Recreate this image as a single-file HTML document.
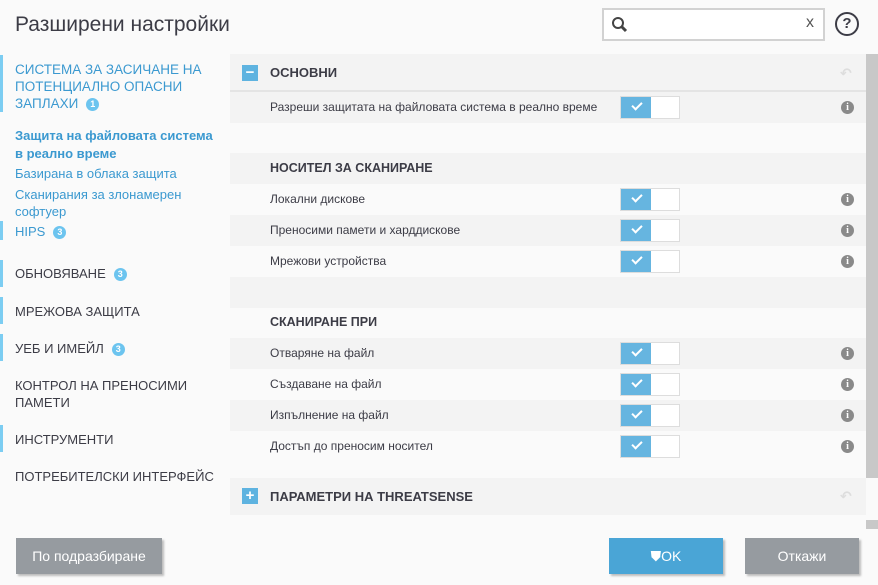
<!DOCTYPE html>
<html><head><meta charset="utf-8"><style>
*{margin:0;padding:0;box-sizing:border-box}
body{width:878px;height:585px;background:#fafafa;font-family:"Liberation Sans","DejaVu Sans",sans-serif;position:relative;overflow:hidden;color:#3c3c46}
.a{position:absolute}
.title{left:15px;top:13px;font-size:21px;color:#3c3c46}
.search{left:602px;top:8px;width:223px;height:33px;border:2px solid #d2d2d2;background:#fff}
.nav{font-size:13px;color:#3c3c46;left:15px;line-height:17px}
.bar{position:absolute;left:0;width:3px;background:#7ccdf2}
.blue{color:#3b99d0}
.badge{display:inline-block;width:13px;height:13px;border-radius:50%;background:#6cc4ef;color:#fff;font-size:9px;text-align:center;line-height:13px;margin-left:8px;vertical-align:1px;font-weight:bold}
.row{position:absolute;left:230px;width:636px;height:31px;font-size:12px;line-height:31px;padding-left:40px}
.g{background:#f3f3f3}
.hd{font-weight:bold;font-size:12.5px}
.tg{position:absolute;left:390px;top:4px;width:60px;height:23px;border:1px solid #ddd;background:#fff}
.tg:before{content:"";position:absolute;left:0;top:0;width:30px;height:21px;background:#66b5e0}
.tg:after{content:"";position:absolute;left:11px;top:5px;width:8px;height:4px;border-left:2px solid #fff;border-bottom:2px solid #fff;transform:rotate(-45deg)}
.i{position:absolute;left:611px;top:9px;width:13px;height:13px;border-radius:50%;background:#8a8a8a;color:#fff;font-size:10px;font-weight:bold;text-align:center;line-height:13px;font-family:"Liberation Serif",serif}
.sec{position:absolute;left:230px;width:636px;background:#f3f3f3;font-weight:bold;font-size:13px;padding-left:40px}
.sq{position:absolute;left:12px;width:16px;height:16px;background:#5eb3e0;color:#fff;font-size:15px;line-height:16px;text-align:center}
.btn{position:absolute;top:538px;height:36px;color:#fff;font-size:14px;text-align:center;line-height:36px;box-shadow:2px 2px 2px rgba(0,0,0,.25)}
</style></head><body>
<div class="a title">Разширени настройки</div>
<div class="a search"><svg class="a" style="left:6px;top:5px" width="20" height="20"><circle cx="8" cy="8" r="5" fill="none" stroke="#444" stroke-width="2"/><line x1="11.5" y1="11.5" x2="16" y2="16" stroke="#444" stroke-width="3"/></svg><span class="a" style="left:202px;top:4px;font-size:16px;color:#555">x</span></div>
<div class="a" style="left:835px;top:12px;width:24px;height:24px;border:2px solid #3c3c46;border-radius:50%;text-align:center;font-size:15px;line-height:20px;font-weight:bold">?</div>

<div class="bar" style="top:55px;height:57px"></div>
<div class="a nav blue" style="top:61px;font-size:13.5px">СИСТЕМА ЗА ЗАСИЧАНЕ НА<br>ПОТЕНЦИАЛНО ОПАСНИ<br>ЗАПЛАХИ<span class="badge">1</span></div>
<div class="a nav blue" style="top:127px;font-weight:bold;line-height:18px">Защита на файловата система<br>в реално време</div>
<div class="a nav blue" style="top:165px">Базирана в облака защита</div>
<div class="a nav blue" style="top:186px">Сканирания за злонамерен<br>софтуер</div>
<div class="bar" style="top:221px;height:19px"></div>
<div class="a nav blue" style="top:223px">HIPS<span class="badge">3</span></div>
<div class="bar" style="top:260px;height:27px"></div>
<div class="a nav" style="top:265px">ОБНОВЯВАНЕ<span class="badge">3</span></div>
<div class="bar" style="top:297px;height:27px"></div>
<div class="a nav" style="top:303px">МРЕЖОВА ЗАЩИТА</div>
<div class="bar" style="top:334px;height:27px"></div>
<div class="a nav" style="top:340px">УЕБ И ИМЕЙЛ<span class="badge">3</span></div>
<div class="a nav" style="top:377px">КОНТРОЛ НА ПРЕНОСИМИ<br>ПАМЕТИ</div>
<div class="bar" style="top:425px;height:27px"></div>
<div class="a nav" style="top:431px">ИНСТРУМЕНТИ</div>
<div class="a nav" style="top:468px">ПОТРЕБИТЕЛСКИ ИНТЕРФЕЙС</div>

<div class="sec" style="top:54px;height:38px;line-height:38px;border-bottom:2px solid #e4e4e4"><div class="sq" style="top:11px">−</div>ОСНОВНИ<span class="a" style="left:610px;top:0;color:#ddd;font-size:14px">↶</span></div>
<div class="row g" style="top:92px">Разреши защитата на файловата система в реално време<div class="tg"></div><div class="i">i</div></div>
<div class="row" style="top:122px"></div>
<div class="row g hd" style="top:153px">НОСИТЕЛ ЗА СКАНИРАНЕ</div>
<div class="row" style="top:184px">Локални дискове<div class="tg"></div><div class="i">i</div></div>
<div class="row g" style="top:215px">Преносими памети и харддискове<div class="tg"></div><div class="i">i</div></div>
<div class="row" style="top:246px">Мрежови устройства<div class="tg"></div><div class="i">i</div></div>
<div class="row g" style="top:277px"></div>
<div class="row hd" style="top:307px">СКАНИРАНЕ ПРИ</div>
<div class="row g" style="top:338px">Отваряне на файл<div class="tg"></div><div class="i">i</div></div>
<div class="row" style="top:369px">Създаване на файл<div class="tg"></div><div class="i">i</div></div>
<div class="row g" style="top:400px">Изпълнение на файл<div class="tg"></div><div class="i">i</div></div>
<div class="row" style="top:431px">Достъп до преносим носител<div class="tg"></div><div class="i">i</div></div>
<div class="sec" style="top:478px;height:37px;line-height:37px"><div class="sq" style="top:10px">+</div>ПАРАМЕТРИ НА THREATSENSE<span class="a" style="left:610px;top:0;color:#ddd;font-size:14px">↶</span></div>

<div class="a" style="left:866px;top:54px;width:12px;height:424px;background:#c8c8c8"></div>
<div class="a" style="left:866px;top:520px;width:12px;height:9px;background:#c8c8c8"></div>

<div class="btn" style="left:16px;width:146px;background:#969ba0">По подразбиране</div>
<div class="btn" style="left:609px;width:114px;background:#4aa5d6">⛊OK</div>
<div class="btn" style="left:745px;width:114px;background:#969ba0">Откажи</div>
</body></html>
